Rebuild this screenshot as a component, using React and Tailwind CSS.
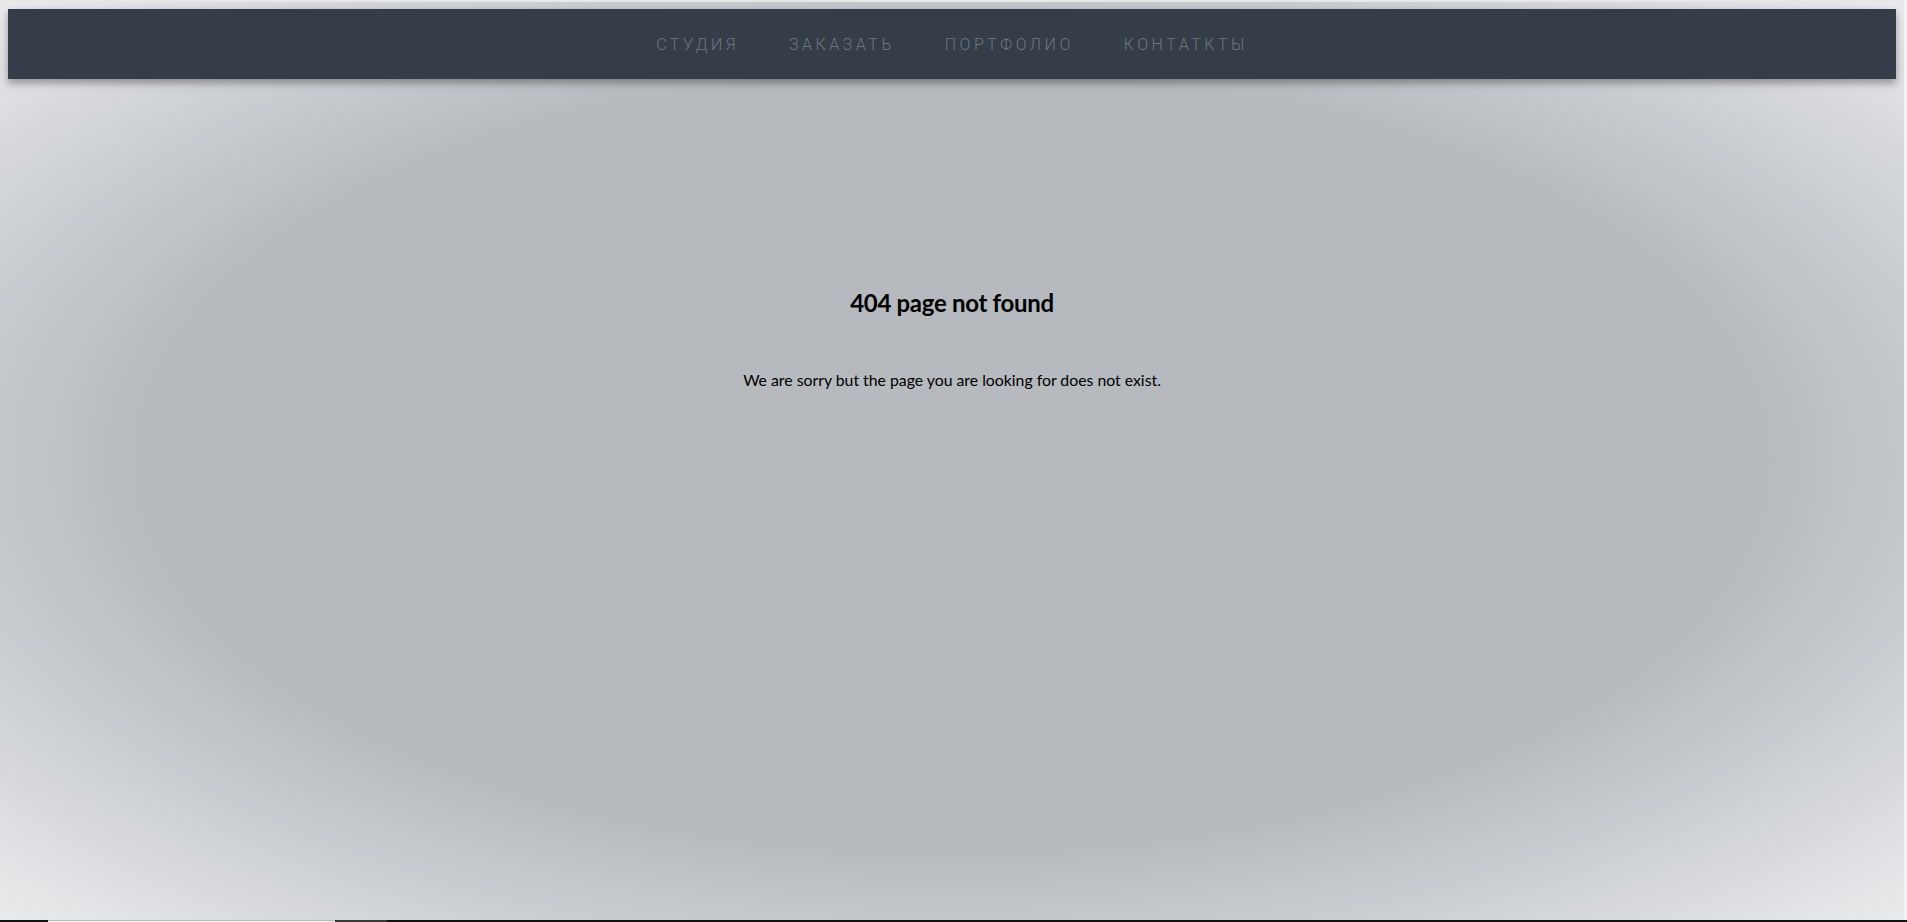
export default function App() {
  const links = ["СТУДИЯ", "ЗАКАЗАТЬ", "ПОРТФОЛИО", "КОНТАТКТЫ"];
  return (
    <div className="flex h-[922px] w-full flex-col overflow-hidden bg-[#eceded]">
      <div className="flex min-h-0 flex-1">
        <div className="flex flex-1 flex-col bg-[radial-gradient(ellipse_at_center,#b6babe_60%,#eaebed_100%)]">
          <div className="h-[2px] bg-[#e6e7e8]" />
          <nav className="mx-[8px] mt-[7px] flex h-[70px] items-center justify-center gap-[50px] bg-[#343d48] pt-[2px] shadow-[0_4px_8px_rgba(0,0,0,0.35)] font-['Roboto',sans-serif]">
            {links.map((l) => (
              <a key={l} href="#" className="text-[16px] font-light tracking-[3.5px] text-[#6f7782]">
                {l}
              </a>
            ))}
          </nav>
          <main className="flex flex-col items-center pt-[209px] font-['Lato',sans-serif] text-black">
            <h1 className="text-[24px] font-bold leading-[29px] tracking-[-0.3px]">404 page not found</h1>
            <p className="mt-[51px] text-[15.8px] leading-[24px]">
              We are sorry but the page you are looking for does not exist.
            </p>
          </main>
        </div>
        <div className="w-[3px] bg-[#f1f1f1]" />
      </div>
      <div className="flex h-[2px] bg-[#111]">
        <div className="w-[48px]" />
        <div className="w-[287px] border-t border-[#b8b8b8] bg-[#f2f2f2]" />
        <div className="w-[52px] bg-[#3a3a3a]" />
      </div>
    </div>
  );
}
